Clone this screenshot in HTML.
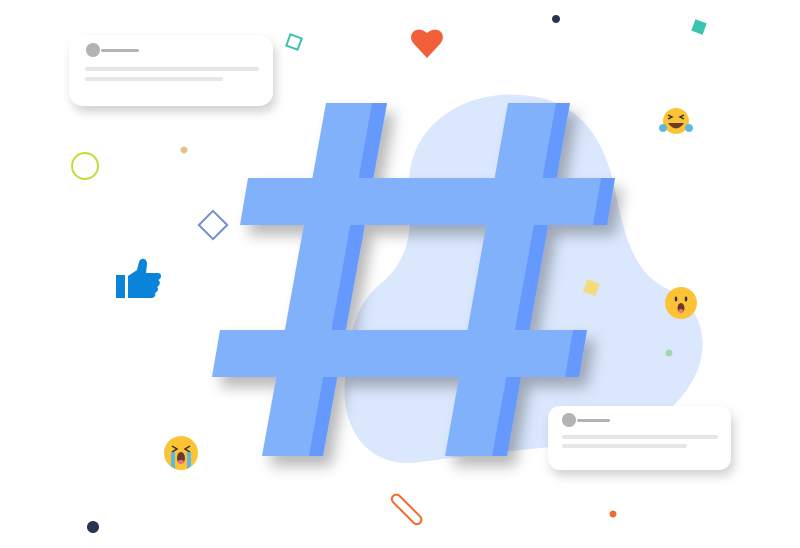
<!DOCTYPE html>
<html><head><style>
html,body{margin:0;padding:0;background:#fff;width:800px;height:548px;overflow:hidden;font-family:"Liberation Sans",sans-serif}
</style></head><body>
<svg width="800" height="548" viewBox="0 0 800 548" xmlns="http://www.w3.org/2000/svg">
<defs>
<filter id="sh" x="-20%" y="-20%" width="150%" height="150%"><feDropShadow dx="8" dy="10" stdDeviation="7" flood-color="#000" flood-opacity="0.28"/></filter>
<filter id="cs" x="-20%" y="-30%" width="140%" height="180%"><feDropShadow dx="3" dy="6" stdDeviation="5" flood-color="#000" flood-opacity="0.18"/></filter>
</defs>
<path d="M410,200 C400,130 460,90 520,95 C580,98 605,140 615,190 C625,240 635,275 670,290 C700,305 715,345 690,385 C665,425 620,440 570,445 C520,450 470,455 420,462 C370,470 340,430 345,380 C350,320 360,300 385,280 C405,260 412,240 410,200 Z" fill="#dae7fd"/>
<g filter="url(#sh)">
<!-- verticals -->
<polygon points="326,103 387,103 323,456 262,456" fill="#82b1fb"/>
<polygon points="372,103 387,103 323,456 309,456" fill="#6699fe"/>
<polygon points="508,103 570,103 507,456 445,456" fill="#82b1fb"/>
<polygon points="556,103 570,103 507,456 492,456" fill="#6699fe"/>
<!-- horizontals -->
<polygon points="248,178 615,178 607,225 240,225" fill="#82b1fb"/>
<polygon points="601,178 615,178 607,225 593,225" fill="#6699fe"/>
<polygon points="220,330 587,330 579,377 212,377" fill="#82b1fb"/>
<polygon points="573,330 587,330 579,377 565,377" fill="#6699fe"/>
</g>
<polygon points="362,159 375,159 372,178 359,178" fill="#6699fe" opacity="0"/>
<!-- cards -->
<g filter="url(#cs)">
<rect x="69" y="35" width="204" height="71" rx="14" fill="#fff"/>
<rect x="548" y="406" width="183" height="64" rx="12" fill="#fff"/>
</g>
<circle cx="93" cy="50" r="7" fill="#b3b3b3"/>
<rect x="101" y="49" width="38" height="3" rx="1.5" fill="#b3b3b3"/>
<rect x="85" y="67" width="174" height="4" rx="2" fill="#e6e6e6"/>
<rect x="85" y="77" width="138" height="4" rx="2" fill="#e6e6e6"/>
<circle cx="569" cy="420" r="7" fill="#b3b3b3"/>
<rect x="577" y="419" width="33" height="3" rx="1.5" fill="#b3b3b3"/>
<rect x="562" y="435" width="156" height="4" rx="2" fill="#e6e6e6"/>
<rect x="562" y="444" width="125" height="4" rx="2" fill="#e6e6e6"/>
<!-- decor -->
<rect x="288" y="36" width="12" height="12" fill="none" stroke="#3cc3b0" stroke-width="2" transform="rotate(20 294 42)"/>
<rect x="693" y="21" width="12" height="12" fill="#3cc3b0" transform="rotate(20 699 27)"/>
<circle cx="556" cy="19" r="4" fill="#2b3350"/>
<circle cx="85" cy="166" r="13" fill="none" stroke="#c7d93b" stroke-width="2"/>
<circle cx="184" cy="150" r="3.5" fill="#e6c28a"/>
<rect x="203" y="215" width="20" height="20" fill="none" stroke="#6e8fd0" stroke-width="2" transform="rotate(45 213 225)"/>
<rect x="585" y="281" width="13" height="13" fill="#f5dc7a" transform="rotate(20 591 287)"/>
<circle cx="669" cy="353" r="3.5" fill="#9fd7b5"/>
<circle cx="93" cy="527" r="6" fill="#2b3350"/>
<circle cx="613" cy="514" r="3.5" fill="#f26a2a"/>
<rect x="388" y="505" width="38" height="9" rx="4.5" fill="none" stroke="#f26a2a" stroke-width="2" transform="rotate(45 407 509)"/>
<!-- heart -->
<path d="M427,58 L414,44 C406,35 416,24 427,33 C438,24 448,35 440,44 Z" fill="#f2603a"/>
<!-- thumb -->
<rect x="116" y="275" width="9" height="23" fill="#0a84d8"/>
<path d="M128,276 L137,270 L139,262 C141,257 147,258 147,264 L146,273 L158,273 C162,273 162,279 158,280 C161,281 160,286 157,287 C159,288 158,292 155,293 C156,295 155,298 151,298 L128,298 Z" fill="#0a84d8"/>
<!-- emojis -->
<circle cx="676" cy="121" r="13" fill="#fcc435"/>
<path d="M668,115 l4,2 -4,2 M684,115 l-4,2 4,2" stroke="#333" stroke-width="1.5" fill="none"/>
<path d="M668,123 Q676,134 684,123 Z" fill="#6b3a2a"/>
<circle cx="663" cy="128" r="4" fill="#5cb8e6"/><circle cx="689" cy="128" r="4" fill="#5cb8e6"/>
<circle cx="681" cy="303" r="16" fill="#fcc435"/>
<ellipse cx="676" cy="299" rx="1.3" ry="2.5" fill="#333"/><ellipse cx="686" cy="299" rx="1.3" ry="2.5" fill="#333"/>
<ellipse cx="681" cy="308" rx="3.5" ry="5" fill="#6b3a2a"/><ellipse cx="681" cy="311" rx="2.5" ry="2" fill="#f2708a"/>
<circle cx="181" cy="453" r="17" fill="#fcc435"/>
<path d="M172,446 l5,3 -5,3 M190,446 l-5,3 5,3" stroke="#333" stroke-width="1.5" fill="none"/>
<ellipse cx="181" cy="458" rx="4" ry="6" fill="#6b3a2a"/><ellipse cx="181" cy="462" rx="3" ry="2" fill="#f2708a"/>
<path d="M171,452 L175,452 L175,469 L171,466 Z M187,452 L191,452 L191,466 L187,469 Z" fill="#5cb8e6"/>
</svg>
</body></html>
